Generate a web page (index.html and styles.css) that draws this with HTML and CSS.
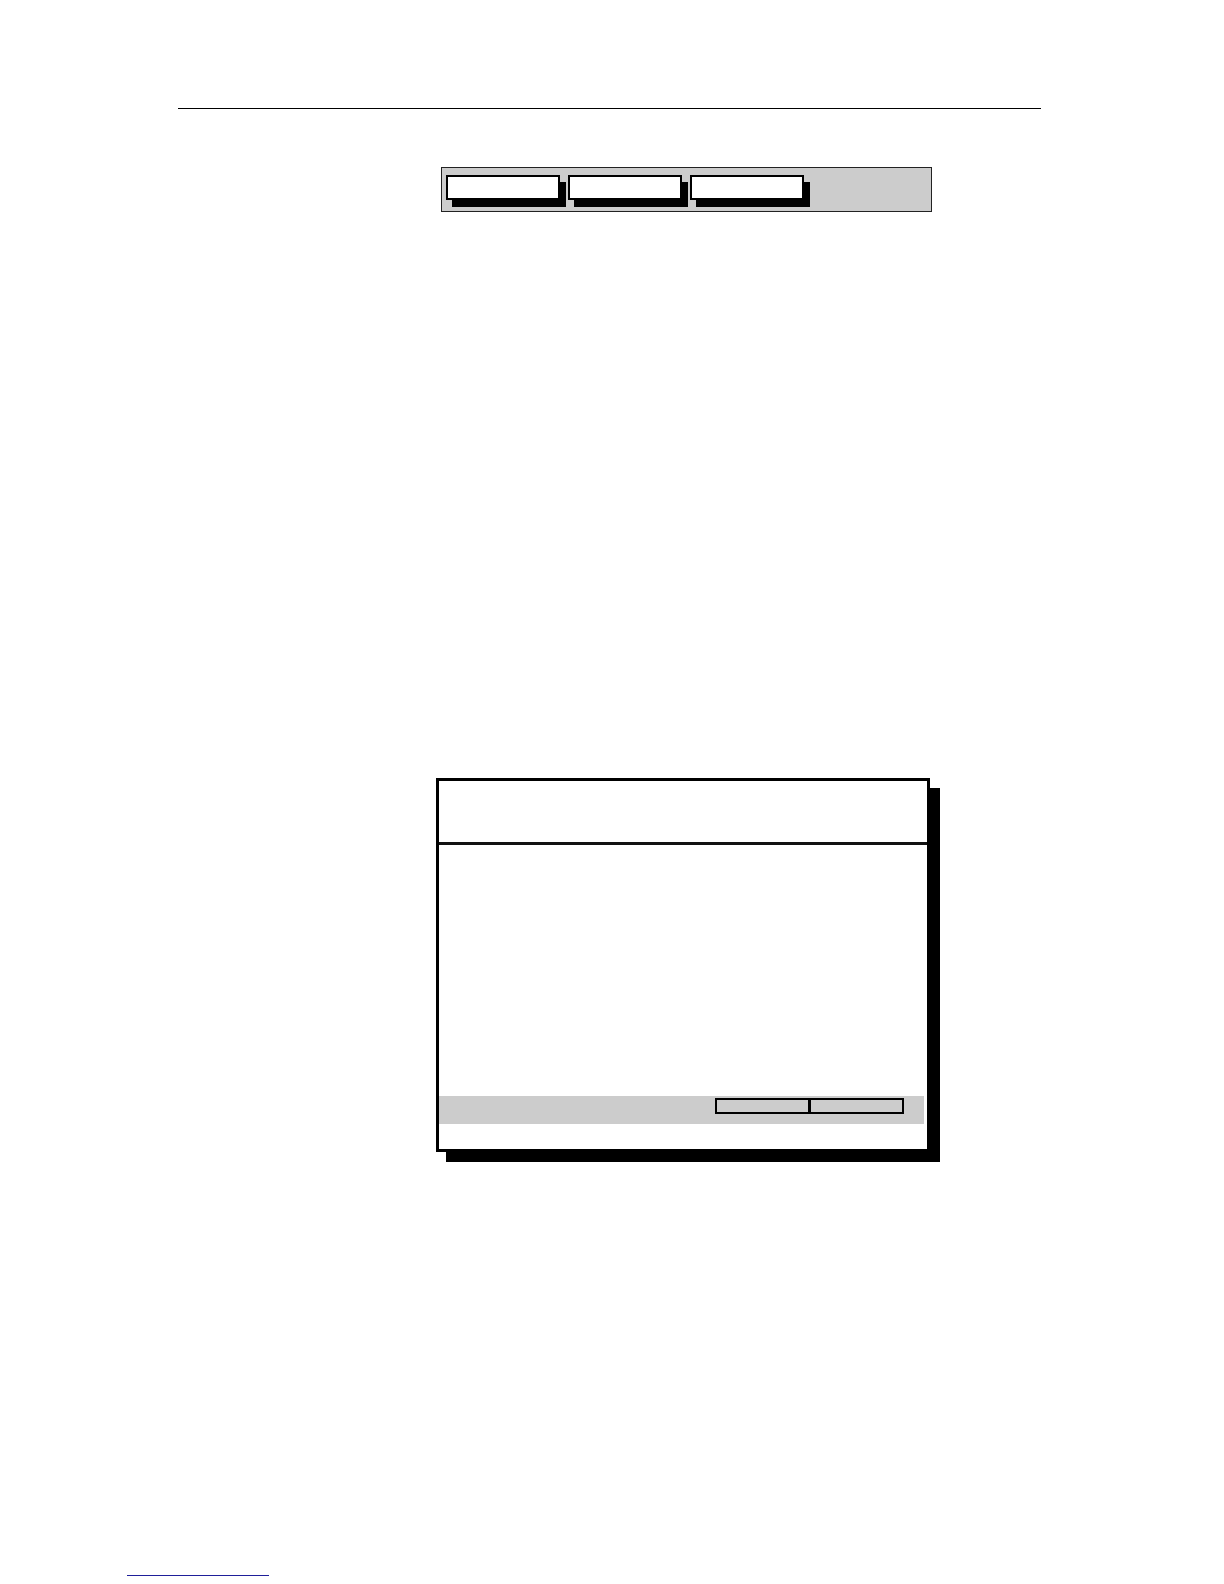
FILE: index.html
```html
<!DOCTYPE html>
<html lang="en">
<head>
<meta charset="utf-8">
<title>Dialog layout</title>
<link rel="stylesheet" href="styles.css">
</head>
<body>
<div class="page">
  <div class="top-rule"></div>
  <div class="toolbar">
    <div class="tb-btn"></div>
    <div class="tb-btn"></div>
    <div class="tb-btn"></div>
  </div>
  <div class="dialog">
    <div class="dlg-header"></div>
    <div class="dlg-body"></div>
    <div class="dlg-bar">
      <div class="bar-btn"></div>
      <div class="bar-btn bar-btn-second"></div>
    </div>
    <div class="dlg-foot"></div>
  </div>
  <a class="footer-link" href="#"></a>
</div>
</body>
</html>
```

FILE: styles.css
```css
html, body {
  margin: 0;
  padding: 0;
  background: #ffffff;
  font-family: "Liberation Sans", Arial, sans-serif;
}

.page {
  width: 1224px;
  min-height: 1584px;
  padding-top: 108px;
  box-sizing: border-box;
}

.top-rule {
  margin-left: 178px;
  width: 863px;
  border-top: 1px solid #000;
}

.toolbar {
  margin-top: 58px;
  margin-left: 441px;
  width: 491px;
  height: 45px;
  box-sizing: border-box;
  border: 1px solid #222;
  background: #cccccc;
  display: flex;
  gap: 8px;
  padding: 7px 4px;
}

.tb-btn {
  width: 114px;
  height: 25px;
  box-sizing: border-box;
  border: 2px solid #000;
  background: #ffffff;
  box-shadow: 6px 7px 0 0 #000;
}

.dialog {
  margin-top: 566px;
  margin-left: 436px;
  width: 494px;
  height: 374px;
  box-sizing: border-box;
  border: 3px solid #000;
  background: #ffffff;
  box-shadow: 10px 10px 0 0 #000;
  display: flex;
  flex-direction: column;
}

.dlg-header {
  height: 61px;
  border-bottom: 3px solid #111;
}

.dlg-body {
  height: 251px;
}

.dlg-bar {
  height: 28px;
  margin-right: 3px;
  background: #cccccc;
  display: flex;
  justify-content: flex-end;
  align-items: flex-start;
  padding: 2px 20px 0 0;
  box-sizing: border-box;
}

.bar-btn {
  width: 95px;
  height: 16px;
  box-sizing: border-box;
  border: 2px solid #000;
  background: #cccccc;
}

.bar-btn-second {
  margin-left: -1px;
}

.dlg-foot {
  height: 25px;
}

.footer-link {
  display: block;
  margin-top: 423px;
  margin-left: 127px;
  width: 142px;
  height: 0;
  border-top: 1px solid #1f1f9a;
}
```
